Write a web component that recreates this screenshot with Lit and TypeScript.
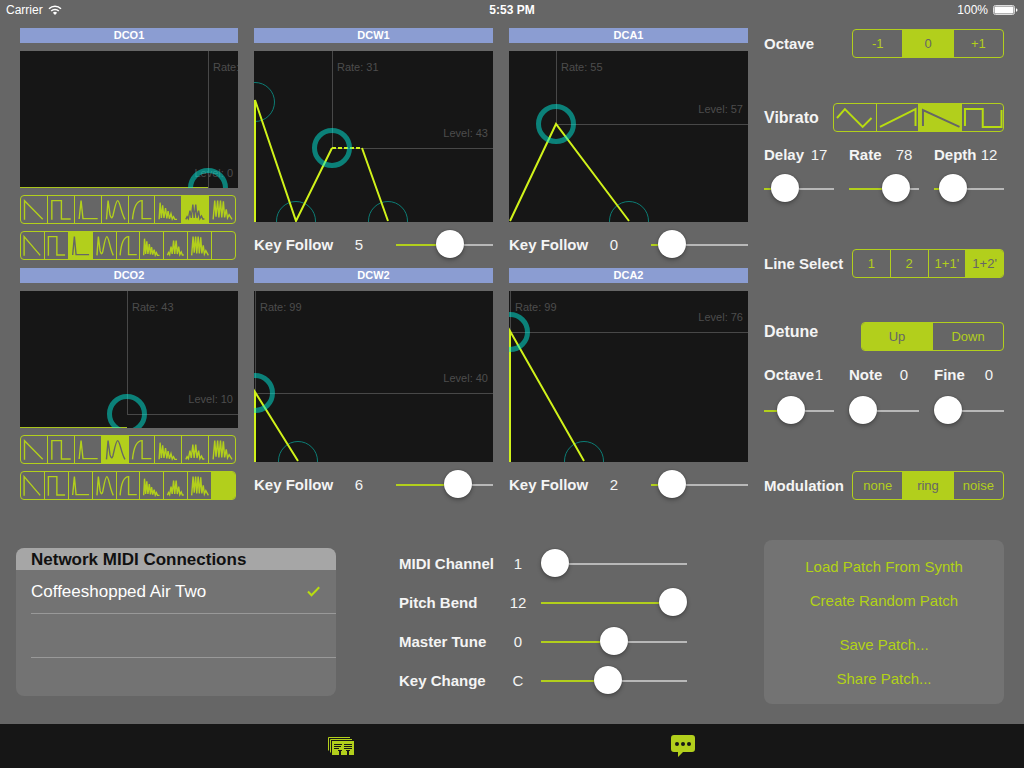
import { LitElement, html, svg, css, nothing } from "lit";
import type { TemplateResult } from "lit";
import { customElement, state } from "lit/decorators.js";
import { classMap } from "lit/directives/class-map.js";
import { styleMap } from "lit/directives/style-map.js";

interface Envelope {
  id: string;
  title: string;
  width: number;
  height: number;
  rate: number | null;
  level: number;
  cursor: [number, number];
  points: [number, number][];
  path: string;
  baseline?: string;
  sustain?: string;
}

interface SliderSpec {
  id: string;
  label: string;
  text: string;
  position: number;
}

const ENVELOPES: Record<string, Envelope> = {
  dco1: {
    id: "dco1", title: "DCO1", width: 218, height: 137, rate: null, level: 0,
    cursor: [188, 137], points: [], path: "", baseline: "M0 136.5H188",
  },
  dcw1: {
    id: "dcw1", title: "DCW1", width: 239, height: 171, rate: 31, level: 43,
    cursor: [78, 97], points: [[1, 51], [42, 170], [134, 170]],
    path: "M1 171V49L42 170L78 97M108 97L134 170", sustain: "M78 97H108",
  },
  dca1: {
    id: "dca1", title: "DCA1", width: 239, height: 171, rate: 55, level: 57,
    cursor: [47, 73], points: [[120, 170]], path: "M1 170L47 73L120 170",
  },
  dco2: {
    id: "dco2", title: "DCO2", width: 218, height: 137, rate: 43, level: 10,
    cursor: [107, 123], points: [], path: "", baseline: "M0 136.5H107",
  },
  dcw2: {
    id: "dcw2", title: "DCW2", width: 239, height: 171, rate: 99, level: 40,
    cursor: [1, 102], points: [[44, 170]], path: "M1 171V101L44 170",
  },
  dca2: {
    id: "dca2", title: "DCA2", width: 239, height: 171, rate: 99, level: 76,
    cursor: [1, 41], points: [[75, 170]], path: "M1 171V40L75 170",
  },
};

const WAVES: [string, string][] = [
  ["Saw", "M11 71V14L68 70"],
  ["Square", "M12 71V14H42V69H71"],
  ["Pulse", "M13 69L19 14L25 68H71"],
  ["Double sine", "M14 70L19 14L25 56Q29 72 34 60C40 35 44 14 49 14C56 14 60 52 72 70"],
  ["Saw pulse", "M11 70C14 40 22 14 41 14V68H70"],
  ["Resonance 1", "M13 70L16 20L20 66L24 28L28 66L33 36L37 67L41 45L45 68L50 53L54 69L58 62L62 70H69"],
  ["Resonance 2", "M12 70L16 62L20 68L25 44L29 66L34 26L38 66L43 26L47 66L52 44L56 68L61 60L65 69H70"],
  ["Resonance 3", "M13 70L18 14L22 62L27 14L31 64L36 14L40 64L45 16L49 64L54 40L58 66L63 56L72 70"],
];

const LFOS: [string, string][] = [
  ["Triangle", "M3 14L11 5L29 23L38 14"],
  ["Saw up", "M3 23L39 5V22"],
  ["Saw down", "M4 22V6L41 23"],
  ["Square", "M3 22V5H21V23H40V6"],
];

const wave = ([name, d]: [string, string]) => html`
  <svg class="wave" viewBox="0 0 81 81" preserveAspectRatio="none" role="img" aria-label=${name}>
    <path d=${d} />
  </svg>`;

const lfo = ([name, d]: [string, string]) => html`
  <svg class="lfo" viewBox="0 0 42 27" role="img" aria-label=${name}>
    <path d=${d} />
  </svg>`;

@customElement("app-root")
export class AppRoot extends LitElement {
  @state() private chosen: Record<string, number> = {
    dco1a: 6, dco1b: 2, dco2a: 3, dco2b: 8,
    octave: 1, vibrato: 2, line: 3, detune: 0, modulation: 1,
  };

  static styles = css`
    :host {
      display: flex;
      flex-direction: column;
      min-height: 100vh;
      background: #666;
      color: #f4f4f4;
      font-family: "Liberation Sans", Arial, Helvetica, sans-serif;
      font-size: 15px;
      line-height: 20px;
      --lime: #b2cf1c;
    }
    * { box-sizing: border-box; }
    button {
      font: inherit;
      color: inherit;
      background: none;
      border: 0;
      padding: 0;
      margin: 0;
      cursor: pointer;
    }
    .status {
      display: grid;
      grid-template-columns: 1fr auto 1fr;
      align-items: center;
      height: 20px;
      padding: 0 6px;
      font-size: 12px;
      color: #fff;
    }
    .carrier, .power { display: flex; align-items: center; gap: 5px; }
    .power { justify-content: flex-end; }
    .clock { font-weight: bold; }

    .synth {
      display: grid;
      grid-template-columns: 218fr 239fr 239fr 240fr;
      column-gap: 16px;
      padding: 8px 20px 0;
    }
    .panels {
      grid-column: 1 / 4;
      display: grid;
      grid-template-columns: subgrid;
    }
    .panel-title {
      margin: 0 0 8px;
      font-size: 11px;
      line-height: 15px;
      text-align: center;
      background: #8b9dd2;
      color: #fff;
    }
    .graph { display: block; width: 100%; height: auto; background: #161616; }
    .graph text { font-size: 11px; fill: #4d4d4d; }
    .end { text-anchor: end; }
    .guide { stroke: #484848; fill: none; }
    .trace { stroke: #d0f21a; stroke-width: 2; fill: none; }
    .baseline { stroke: #a9c41e; fill: none; }
    .sustain { stroke: #d0f21a; stroke-width: 2; stroke-dasharray: 4 2; fill: none; }
    .handle { stroke: #0c7d75; fill: none; }
    .active { stroke: rgba(0, 235, 220, 0.5); stroke-width: 5; fill: none; }
    .banks { display: grid; gap: 7px; padding: 7px 2px 8px 0; }

    .segments {
      display: flex;
      height: 29px;
      border: 1px solid var(--lime);
      border-radius: 4px;
      overflow: hidden;
      font-size: 13px;
      color: var(--lime);
    }
    .segment { flex: 1 1 0; min-width: 0; height: 27px; }
    .segment + .segment { border-left: 1px solid var(--lime); }
    .segment.on { background: var(--lime); color: #666; }
    .wave, .lfo { display: block; width: 100%; height: 27px; }
    .wave path, .lfo path {
      fill: none;
      stroke: currentColor;
      vector-effect: non-scaling-stroke;
    }
    .wave path { stroke-width: 1.4; }
    .lfo path { stroke-width: 2; stroke: #b8dc10; }
    .on .lfo path { stroke: #666; }

    .name { font-weight: bold; white-space: nowrap; }
    .value { text-align: center; }
    .range {
      appearance: none;
      display: block;
      width: 100%;
      min-width: 0;
      height: 28px;
      margin: 0;
      background: none;
    }
    .range::-webkit-slider-runnable-track {
      height: 2px;
      background: linear-gradient(
        90deg,
        var(--lime) calc(14px + (100% - 28px) * var(--position)),
        #b8b8b8 0
      );
    }
    .range::-webkit-slider-thumb {
      appearance: none;
      width: 28px;
      height: 28px;
      margin-top: -14px;
      border-radius: 50%;
      background: #fff;
      box-shadow: 0 0 1px rgba(0, 0, 0, 0.6), 0 2px 4px rgba(0, 0, 0, 0.3);
    }
    .follow {
      display: grid;
      grid-template-columns: 90px 30px 1fr;
      align-items: center;
      height: 46px;
    }
    .follow .range { margin-left: 22px; width: auto; }

    .voice { padding-top: 1px; }
    .setting {
      display: flex;
      align-items: center;
      justify-content: space-between;
      height: 29px;
    }
    .large { font-size: 16px; }
    .three { width: 152px; }
    .two { width: 143px; }
    .four { width: 171px; }
    .vibrato { margin-top: 45px; }
    .line { margin-top: 46px; }
    .detune { margin-top: 44px; align-items: flex-start; }
    .modulation { margin-top: 46px; }
    .trio {
      display: grid;
      grid-template-columns: repeat(3, 1fr);
      column-gap: 15px;
      padding-top: 13px;
    }
    .dial { display: grid; grid-template-columns: minmax(0, 1fr) 30px; row-gap: 10px; }
    .dial .range { grid-column: 1 / 3; }
    .tuning { padding-top: 14px; }
    .tuning .dial { row-gap: 12px; }

    .lower {
      display: grid;
      grid-template-columns: 320fr 302fr 240fr;
      column-gap: 63px;
      align-items: center;
      padding: 32px 20px 20px 16px;
    }
    .card { background: #737373; border-radius: 8px; overflow: hidden; }
    .card-title {
      margin: 0;
      padding: 2px 0 0 15px;
      font-size: 17px;
      line-height: 20px;
      background: #a6a6a6;
      color: #111;
    }
    .peers { list-style: none; margin: 0; padding: 0 0 0 15px; font-size: 17px; color: #fff; }
    .peer {
      display: flex;
      align-items: center;
      justify-content: space-between;
      height: 44px;
      padding-right: 16px;
      border-bottom: 1px solid #999;
    }
    .peer:last-child { height: 38px; border: 0; }
    .globals { display: grid; row-gap: 11px; padding-right: 14px; }
    .global {
      display: grid;
      grid-template-columns: 104px 30px 1fr;
      align-items: center;
    }
    .global .range { margin-left: 8px; width: auto; }
    .actions {
      display: flex;
      flex-direction: column;
      padding: 10px 0 8px;
      color: #b2d216;
    }
    .action { height: 34px; }
    .files { margin-top: 10px; }

    .tabs {
      display: grid;
      grid-template-columns: 1fr 2fr 2fr 1fr;
      height: 44px;
      margin-top: auto;
      background: #161616;
      color: var(--lime);
    }
    .tab { display: grid; place-items: center; }
    .tab:first-child { grid-column: 2; }
  `;

  private choose(group: string, index: number) {
    this.chosen = { ...this.chosen, [group]: index };
  }

  private slide(event: Event) {
    const input = event.target as HTMLInputElement;
    input.style.setProperty("--position", String(Number(input.value) / 100));
  }

  private segments(group: string, label: string, size: string, items: (string | TemplateResult | typeof nothing)[]) {
    return html`
      <div class="segments ${size}" role="group" aria-label=${label}>
        ${items.map((item, i) => {
          const on = this.chosen[group] === i;
          return html`<button
            class=${classMap({ segment: true, on })}
            aria-pressed=${on ? "true" : "false"}
            aria-label=${item === nothing ? "Off" : nothing}
            @click=${() => this.choose(group, i)}
          >${item}</button>`;
        })}
      </div>`;
  }

  private slider(kind: string, s: SliderSpec) {
    return html`
      <div class=${kind}>
        <label class="name" for=${s.id}>${s.label}</label>
        <output class="value" for=${s.id}>${s.text}</output>
        <input
          class="range" id=${s.id} type="range" min="0" max="100"
          .value=${String(s.position)}
          style=${styleMap({ "--position": String(s.position / 100) })}
          @input=${this.slide}
        />
      </div>`;
  }

  private panel(e: Envelope, controls: TemplateResult) {
    const [x, y] = e.cursor;
    return html`
      <section>
        <h2 class="panel-title">${e.title}</h2>
        <svg class="graph" viewBox="0 0 ${e.width} ${e.height}" role="img" aria-label="${e.title} envelope">
          <path class="guide" d="M${x + 0.5} 0V${y}M${x} ${y + 0.5}H${e.width}" />
          <text x=${x + 5} y="20">${e.rate === null ? "Rate:" : `Rate: ${e.rate}`}</text>
          <text class="end" x=${e.width - 5} y=${y - 11}>Level: ${e.level}</text>
          ${e.points.map(([cx, cy]) => svg`<circle class="handle" cx=${cx} cy=${cy} r="19.5" />`)}
          <path class="trace" d=${e.path} />
          ${e.baseline ? svg`<path class="baseline" d=${e.baseline} />` : nothing}
          ${e.sustain ? svg`<path class="sustain" d=${e.sustain} />` : nothing}
          <circle class="active" cx=${x} cy=${y} r="17.5" />
        </svg>
        ${controls}
      </section>`;
  }

  private banks(id: string) {
    const icons = WAVES.map(wave);
    return html`
      <div class="banks">
        ${this.segments(`${id}a`, "First waveform", "", icons)}
        ${this.segments(`${id}b`, "Second waveform", "", [...icons, nothing])}
      </div>`;
  }

  private follow(id: string, text: string, position: number) {
    return this.slider("follow", { id, label: "Key Follow", text, position });
  }

  render() {
    return html`
      <header class="status">
        <span class="carrier">Carrier
          <svg width="14" height="10" viewBox="0 0 14 10" aria-hidden="true">
            <path d="M1 3.8A8.6 8.6 0 0 1 13 3.8M3.2 6A5.5 5.5 0 0 1 10.8 6" fill="none" stroke="#fff" stroke-width="1.5" />
            <path d="M7 10L4.9 7.7A3 3 0 0 1 9.1 7.7Z" fill="#fff" />
          </svg>
        </span>
        <span class="clock">5:53 PM</span>
        <span class="power">100%
          <svg width="25" height="10" viewBox="0 0 25 10" aria-hidden="true">
            <rect x="0.5" y="0.5" width="21" height="9" rx="2" fill="none" stroke="#ddd" />
            <rect x="1.5" y="1.5" width="19" height="7" rx="1" fill="#fff" />
            <path d="M23 3.2Q24.5 3.6 24.5 5T23 6.8Z" fill="#fff" />
          </svg>
        </span>
      </header>

      <main>
        <div class="synth">
          <div class="panels">
            ${this.panel(ENVELOPES.dco1, this.banks("dco1"))}
            ${this.panel(ENVELOPES.dcw1, this.follow("kf-w1", "5", 58))}
            ${this.panel(ENVELOPES.dca1, this.follow("kf-a1", "0", 10))}
            ${this.panel(ENVELOPES.dco2, this.banks("dco2"))}
            ${this.panel(ENVELOPES.dcw2, this.follow("kf-w2", "6", 69))}
            ${this.panel(ENVELOPES.dca2, this.follow("kf-a2", "2", 10))}
          </div>
          <div class="voice">
            <div class="setting">
              <span class="name">Octave</span>
              ${this.segments("octave", "Octave", "three", ["-1", "0", "+1"])}
            </div>
            <div class="setting vibrato">
              <span class="name large">Vibrato</span>
              ${this.segments("vibrato", "Vibrato", "four", LFOS.map(lfo))}
            </div>
            <div class="trio">
              ${this.slider("dial", { id: "delay", label: "Delay", text: "17", position: 16 })}
              ${this.slider("dial", { id: "rate", label: "Rate", text: "78", position: 79 })}
              ${this.slider("dial", { id: "depth", label: "Depth", text: "12", position: 11 })}
            </div>
            <div class="setting line">
              <span class="name">Line Select</span>
              ${this.segments("line", "Line Select", "three", ["1", "2", "1+1'", "1+2'"])}
            </div>
            <div class="setting detune">
              <span class="name large">Detune</span>
              ${this.segments("detune", "Detune", "two", ["Up", "Down"])}
            </div>
            <div class="trio tuning">
              ${this.slider("dial", { id: "octaves", label: "Octave", text: "1", position: 31 })}
              ${this.slider("dial", { id: "note", label: "Note", text: "0", position: 0 })}
              ${this.slider("dial", { id: "fine", label: "Fine", text: "0", position: 0 })}
            </div>
            <div class="setting modulation">
              <span class="name">Modulation</span>
              ${this.segments("modulation", "Modulation", "three", ["none", "ring", "noise"])}
            </div>
          </div>
        </div>

        <div class="lower">
          <section class="card">
            <h2 class="card-title">Network MIDI Connections</h2>
            <ul class="peers">
              <li class="peer">
                Coffeeshopped Air Two
                <svg width="13" height="11" viewBox="0 0 13 11" role="img" aria-label="Connected">
                  <path d="M1 5.5L4.5 9.3L12.2 1.2" fill="none" stroke="#b8dc10" stroke-width="2" />
                </svg>
              </li>
              <li class="peer"></li>
              <li class="peer"></li>
            </ul>
          </section>
          <section class="globals">
            ${this.slider("global", { id: "channel", label: "MIDI Channel", text: "1", position: 0 })}
            ${this.slider("global", { id: "bend", label: "Pitch Bend", text: "12", position: 100 })}
            ${this.slider("global", { id: "tune", label: "Master Tune", text: "0", position: 50 })}
            ${this.slider("global", { id: "key", label: "Key Change", text: "C", position: 45 })}
          </section>
          <section class="card actions">
            <button class="action">Load Patch From Synth</button>
            <button class="action">Create Random Patch</button>
            <button class="action files">Save Patch...</button>
            <button class="action">Share Patch...</button>
          </section>
        </div>
      </main>

      <nav class="tabs">
        <button class="tab" aria-label="Patches">
          <svg width="26" height="18" viewBox="0 0 26 18" aria-hidden="true">
            <path d="M0.5 13.5V0.5H22M2.5 15.5V2.5H24" fill="none" stroke="currentColor" />
            <path d="M4 4H26V18H21V14H19V18H13V14H11V18H4Z" fill="currentColor" />
            <path d="M6 7.5H14M6 9.5H13M6 11.5H11M16 7.5H24M16 9.5H24M16 11.5H24M10 13.5H14M18 13.5H22" fill="none" stroke="#161616" />
          </svg>
        </button>
        <button class="tab" aria-label="Messages">
          <svg width="24" height="22" viewBox="0 0 24 22" aria-hidden="true">
            <path d="M3 0H21Q24 0 24 3V14Q24 17 21 17H12L7 22V17H3Q0 17 0 14V3Q0 0 3 0Z" fill="currentColor" />
            <circle cx="6" cy="9" r="2" fill="#161616" />
            <circle cx="12" cy="9" r="2" fill="#161616" />
            <circle cx="18" cy="9" r="2" fill="#161616" />
          </svg>
        </button>
      </nav>
    `;
  }
}
